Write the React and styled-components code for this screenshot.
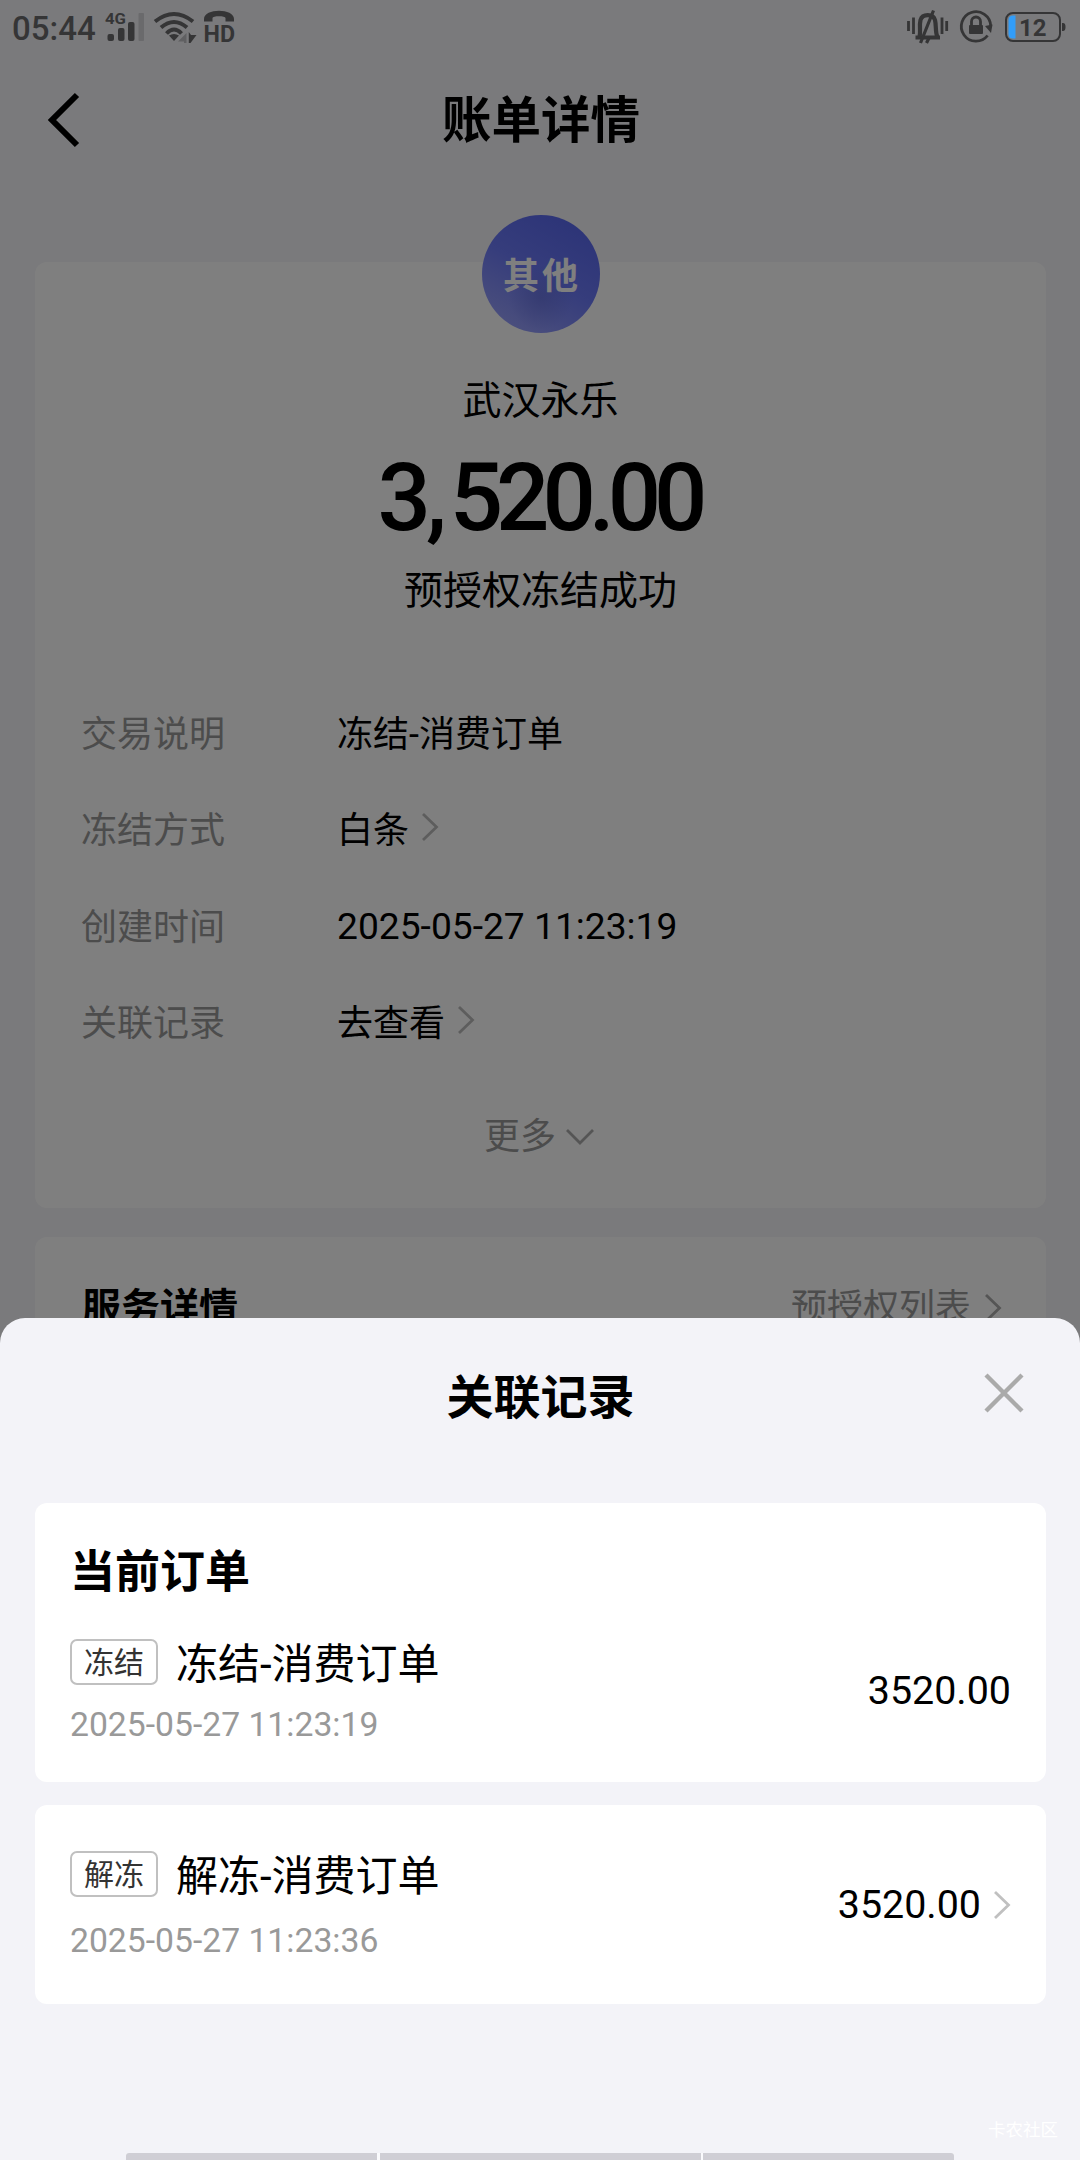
import React, { Component } from 'react';
import styled, { createGlobalStyle } from 'styled-components';

const STATUS_COLOR = '#353536';

const DETAILS = [
	{ label: '交易说明', value: '冻结-消费订单' },
	{ label: '冻结方式', value: '白条', link: true },
	{ label: '创建时间', value: '2025-05-27 11:23:19', numeric: true },
	{ label: '关联记录', value: '去查看', link: true },
];

const Chevron = ({ color }) => (
	<ChevronIcon viewBox="0 0 18 30">
		<path d="M2 2 L15.5 15 L2 28" fill="none" stroke={color} strokeWidth="2.8" />
	</ChevronIcon>
);

const StatusLeft = () => (
	<svg width="140" height="56" viewBox="100 0 140 56" fill={STATUS_COLOR}>
		<text x="105" y="24" fontSize="15" fontWeight="700" fontFamily="Roboto, sans-serif" textLength="21" lengthAdjust="spacingAndGlyphs">4G</text>
		<rect x="107.5" y="34" width="6.5" height="7" rx="2" />
		<rect x="118" y="28" width="6.5" height="13" rx="2" />
		<rect x="128" y="22" width="6.5" height="19" rx="2" />
		<rect x="138.5" y="13" width="5.5" height="28" rx="1" fill="#6a6a6c" />
		<g fill="none" stroke={STATUS_COLOR} strokeWidth="4">
			<path d="M155 21.5 Q174 6.5 193 21.5" />
			<path d="M161 27.5 Q174 16.5 187 27.5" />
			<path d="M166.5 33.5 Q174 25.500 181.500 33.500" />
		</g>
		<path d="M169 35.500 Q174 32.500 179 35.500 L174 41 Z" />
		<path d="M178 41.500 L186.500 33 V43 H184 V41.500 Z" fill="#606062" />
		<path d="M188.800 32 L191 35 H196.500 L190.500 43 H188.800 Z" />
		<path d="M204 21.500 V19 C204 8 234 8 234 19 V21.500 H225.500 V18 C225.500 15.500 212.500 15.500 212.500 18 V21.500 Z" />
		<text x="203.500" y="41.500" fontSize="24.500" fontWeight="700" fontFamily="Roboto, sans-serif" textLength="31.500" lengthAdjust="spacingAndGlyphs">HD</text>
	</svg>
);

const StatusRight = () => (
	<svg width="162" height="56" viewBox="906 0 162 56" fill={STATUS_COLOR}>
		<g stroke={STATUS_COLOR} strokeWidth="2.8" fill="none">
			<path d="M908.500 21 V31 M913.500 17.500 V34 M942 17.500 V34 M946.700 21 V31" />
			<path d="M915.500 37.500 H940 M919.500 37 C921 32 919 26 920.500 20 C922.500 13.500 933 13.500 935 20 C936.500 26 935 32 937.500 37" strokeWidth="4.2" />
			<path d="M933.500 10.500 L920.500 43 M929 38 L926.500 43" strokeWidth="3.2" />
			<path d="M987.600 35.500 A14.700 14.700 0 1 1 990.700 26" strokeWidth="2.8" />
			<path d="M971.500 26 V21.500 A4.500 4.500 0 0 1 980.500 21.500 V26" strokeWidth="2.8" />
		</g>
		<rect x="969" y="25" width="14" height="9" rx="1" />
		<path d="M985 26 L992.500 24.500 L991 33 Z" />
		<rect x="1006" y="13" width="54" height="28" rx="7" fill="none" stroke={STATUS_COLOR} strokeWidth="2" />
		<path d="M1062 23 H1063 Q1065.500 23 1065.500 27 Q1065.500 31 1063 31 H1062 Z" />
		<path d="M1015.500 15.500 V38.500 H1013 Q1008.500 38.500 1008.500 34 V20 Q1008.500 15.500 1013 15.500 Z" fill="#329df8" />
		<text x="1019" y="36" fontSize="24" fontWeight="700" fontFamily="Roboto, sans-serif">12</text>
	</svg>
);

const Record = ({ tag, title, time, amount, link, gap }) => (
	<RecordRow>
		<div>
			<RecordHead>
				<Tag>{tag}</Tag>
				<RecordTitle>{title}</RecordTitle>
			</RecordHead>
			<RecordTime gap={gap}>{time}</RecordTime>
		</div>
		<RecordAmount>
			{amount}
			{link && <Chevron color="#c0c0c0" />}
		</RecordAmount>
	</RecordRow>
);

class App extends Component {
	constructor(props) {
		super(props);
		this.state = {
			isOpen: true
		}
		this.toggleSheet = this.toggleSheet.bind(this);
	}

	render() {
		return (
			<Screen>
				<GlobalStyle />
				<StatusBar>
					<StatusGroup>
						<Clock>05:44</Clock>
						<StatusLeft />
					</StatusGroup>
					<StatusRight />
				</StatusBar>
				<NavBar>
					<Back viewBox="0 0 34 56">
						<path d="M31 3 L6 28 L31 53" fill="none" stroke="#000" strokeWidth="6" />
					</Back>
					<h1>账单详情</h1>
				</NavBar>
				<BillCard>
					<Badge>其他</Badge>
					<Merchant>武汉永乐</Merchant>
					<Amount>3<i>,</i>520.00</Amount>
					<Status>预授权冻结成功</Status>
					<DetailList>
						{DETAILS.map(item => (
							<DetailRow key={item.label} numeric={item.numeric}>
								<dt>{item.label}</dt>
								<dd onClick={item.link ? this.toggleSheet : undefined}>
									{item.value}
									{item.link && <Chevron color="#bbb" />}
								</dd>
							</DetailRow>
						))}
					</DetailList>
					<More>
						更多
						<svg width="30" height="18" viewBox="0 0 30 18">
							<path d="M2 2 L15 15 L28 2" fill="none" stroke="#aaa" strokeWidth="2.8" />
						</svg>
					</More>
				</BillCard>
				<ServiceCard>
					<h2>服务详情</h2>
					<span>预授权列表<Chevron color="#aaa" /></span>
				</ServiceCard>
				{this.getSheet()}
				<Watermark>卡农社区</Watermark>
				<Gestures>
					<span /><span /><span />
				</Gestures>
			</Screen>
		);
	}

	toggleSheet() {
		this.setState({
			isOpen: !this.state.isOpen
		})
	}

	getSheet() {
		if (!this.state.isOpen) return null
		return <Overlay>
			<Sheet>
				<SheetHeader>
					<h2>关联记录</h2>
					<Close viewBox="0 0 42 42" onClick={this.toggleSheet}>
						<path d="M3 3 L39 39 M39 3 L3 39" stroke="#aaa" strokeWidth="4.4" />
					</Close>
				</SheetHeader>
				<RecordCard height={279} top={40}>
					<h3>当前订单</h3>
					<Record tag="冻结" title="冻结-消费订单" time="2025-05-27 11:23:19" amount="3520.00" gap={17} />
				</RecordCard>
				<RecordCard height={199} top={43}>
					<Record tag="解冻" title="解冻-消费订单" time="2025-05-27 11:23:36" amount="3520.00" gap={21} link />
				</RecordCard>
			</Sheet>
		</Overlay>
	}
}

export default App

const GlobalStyle = createGlobalStyle`
	* {
		box-sizing: border-box;
	}
	body {
		margin: 0;
		font-family: Roboto, "Noto Sans CJK SC", sans-serif;
		color: #000;
	}
	h1, h2, h3, dl, dd {
		margin: 0;
	}
`;

const Screen = styled.div`
	position: relative;
	width: 1080px;
	height: 2160px;
	overflow: hidden;
	background: #f4f4f8;
`;

const StatusBar = styled.div`
	position: relative;
	z-index: 2;
	display: flex;
	justify-content: space-between;
	height: 56px;
	padding: 0 12px;
`;

const StatusGroup = styled.div`
	display: flex;
`;

const Clock = styled.span`
	width: 88px;
	line-height: 57px;
	font-size: 33px;
	font-weight: 500;
	color: ${STATUS_COLOR};
`;

const NavBar = styled.div`
	display: flex;
	align-items: center;
	height: 128px;
	padding: 0 46px;
	h1 {
		flex: 1;
		padding-right: 32px;
		text-align: center;
		font-size: 49.5px;
		line-height: 60px;
		font-weight: 700;
		margin-top: 1px;
	}
`;

const Back = styled.svg`
	width: 34px;
	height: 56px;
`;

const ChevronIcon = styled.svg`
	flex: none;
	width: 18px;
	height: 30px;
`;

const BillCard = styled.div`
	display: flex;
	flex-direction: column;
	align-items: center;
	width: 1011px;
	height: 946px;
	margin: 78px 34px 0 35px;
	border-radius: 12px;
	background: #fff;
`;

const Badge = styled.div`
	width: 118px;
	height: 118px;
	margin-top: -47px;
	padding: 3px 0 0 3px;
	border-radius: 50%;
	background: radial-gradient(circle at 50% 70%, rgba(80, 90, 190, .35), transparent 32%), linear-gradient(210deg, #5a69f0 12%, #6c7af8 50%, #98a0fa 90%);
	color: #fff;
	font-size: 36px;
	font-weight: 700;
	letter-spacing: 3px;
	line-height: 118px;
	text-align: center;
`;

const Merchant = styled.div`
	margin-top: 38px;
	font-size: 39px;
	line-height: 60px;
`;

const Amount = styled.div`
	margin-top: 12px;
	margin-left: -3px;
	font-size: 94px;
	font-weight: 500;
	line-height: 110px;
	letter-spacing: -7.1px;
	i {
		font-style: normal;
		margin: 0 10px 0 2px;
	}
`;

const Status = styled.div`
	margin-top: 8px;
	font-size: 39px;
	line-height: 60px;
`;

const DetailList = styled.dl`
	align-self: stretch;
	margin-top: 62px;
	padding: 0 46px;
`;

const DetailRow = styled.div`
	display: flex;
	align-items: center;
	height: 96.3px;
	dt {
		width: 256px;
		font-size: 36px;
		color: #999;
	}
	dd {
		display: flex;
		align-items: center;
		gap: 12px;
		padding-top: ${props => props.numeric ? 5 : 0}px;
		font-size: ${props => props.numeric ? 37.2 : 36}px;
	}
`;

const More = styled.div`
	display: flex;
	align-items: center;
	gap: 9px;
	margin: 39px 2px 0 0;
	font-size: 36px;
	line-height: 60px;
	color: #999;
`;

const ServiceCard = styled.div`
	display: flex;
	justify-content: space-between;
	height: 300px;
	margin: 29px 34px 0 35px;
	padding: 41px 44px 0 47px;
	border-radius: 12px;
	background: #fff;
	line-height: 60px;
	h2 {
		font-size: 39px;
		font-weight: 700;
	}
	span {
		display: flex;
		align-items: center;
		gap: 13px;
		height: 60px;
		font-size: 36px;
		color: #999;
	}
`;

const Overlay = styled.div`
	position: absolute;
	top: 0;
	right: 0;
	bottom: 0;
	left: 0;
	z-index: 1;
	display: flex;
	flex-direction: column;
	justify-content: flex-end;
	background: rgba(0, 0, 0, .5);
`;

const Sheet = styled.div`
	height: 842px;
	border-radius: 25px 25px 0 0;
	background: #f3f3f8;
`;

const SheetHeader = styled.div`
	display: flex;
	align-items: center;
	height: 185px;
	padding: 0 55px 30px 98px;
	h2 {
		flex: 1;
		margin-top: 5px;
		text-align: center;
		font-size: 47px;
		line-height: 60px;
		font-weight: 700;
	}
`;

const Close = styled.svg`
	width: 42px;
	height: 42px;
	margin-top: -5px;
`;

const RecordCard = styled.div`
	height: ${props => props.height}px;
	margin: 0 34px 23px 35px;
	padding: ${props => props.top}px 35px 0;
	border-radius: 12px;
	background: #fff;
	h3 {
		margin-bottom: 33px;
		font-size: 45px;
		line-height: 60px;
		font-weight: 700;
	}
`;

const RecordRow = styled.div`
	display: flex;
	justify-content: space-between;
	align-items: center;
`;

const RecordHead = styled.div`
	display: flex;
	align-items: center;
	height: 52px;
`;

const Tag = styled.span`
	width: 88px;
	height: 46px;
	margin-right: 18px;
	border: 2px solid #c0c0c0;
	border-radius: 7px;
	font-size: 30px;
	line-height: 44px;
	text-align: center;
	color: #333;
`;

const RecordTitle = styled.span`
	padding-top: 6px;
	font-size: 42px;
	line-height: 52px;
`;

const RecordTime = styled.div`
	margin-top: ${props => props.gap}px;
	font-size: 33.7px;
	line-height: 40px;
	color: #999;
`;

const RecordAmount = styled.div`
	display: flex;
	align-items: center;
	gap: 12px;
	font-size: 39.4px;
	line-height: 48px;
`;

const Watermark = styled.div`
	position: absolute;
	right: 22px;
	bottom: 18px;
	z-index: 2;
	font-size: 17.5px;
	line-height: 24px;
	color: #fff;
`;

const Gestures = styled.div`
	position: absolute;
	left: 126px;
	right: 126px;
	bottom: 0;
	z-index: 2;
	display: grid;
	grid-template-columns: 251px 321px 251px;
	gap: 2.5px;
	height: 7px;
	border-radius: 3px 3px 0 0;
	overflow: hidden;
	background: #fafafd;
	span {
		background: #cfced5;
	}
`;
